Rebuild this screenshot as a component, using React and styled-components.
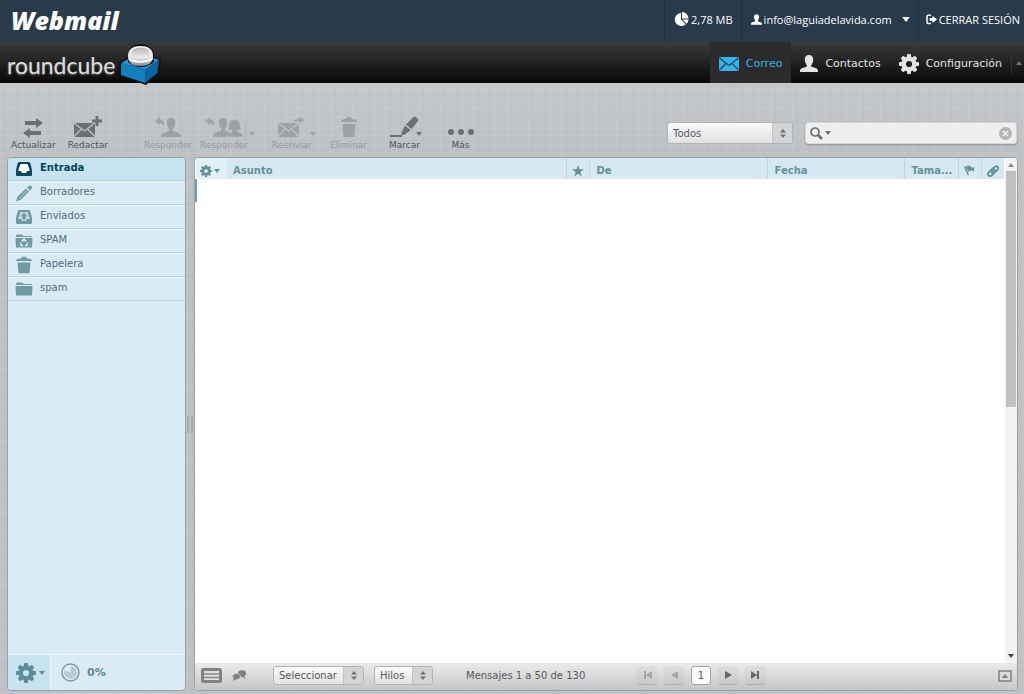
import React, { useState } from "react";
import styled, { createGlobalStyle, css } from "styled-components";

const GlobalStyle = createGlobalStyle`
  * {
    box-sizing: border-box;
  }
  body {
    margin: 0;
    font-family: "DejaVu Sans", sans-serif;
    font-size: 10px;
    color: #565b5e;
  }
  button, select, input {
    font: inherit;
    color: inherit;
    margin: 0;
  }
  button {
    border: 0;
    padding: 0;
    background: none;
    cursor: pointer;
  }
  a {
    color: inherit;
    text-decoration: none;
  }
  svg {
    display: block;
    flex: none;
  }
`;

/*-------------- Page --------------------*/
const Page = styled.div`
  display: flex;
  flex-direction: column;
  min-height: 100vh;
  background:
    repeating-linear-gradient(90deg, rgba(255, 255, 255, 0.06) 0 1px, transparent 1px 5px, rgba(70, 80, 90, 0.03) 5px 6px, transparent 6px 11px),
    repeating-linear-gradient(0deg, rgba(255, 255, 255, 0.06) 0 1px, transparent 1px 4px, rgba(70, 80, 90, 0.03) 4px 5px, transparent 5px 9px),
    linear-gradient(#c5c8ca 83px, #bfc2c5 150px, #bfc2c5);
`;

/*-------------- Account bar --------------------*/
const AccountBar = styled.header`
  display: flex;
  justify-content: space-between;
  height: 42px;
  background: #293a4a;
  color: #fff;
  font-family: "Open Sans", sans-serif;
  font-size: 11px;
`;

const Brand = styled.a`
  padding-left: 11px;
  font: italic 800 25px/40px "Open Sans", sans-serif;
`;

const AccountMenu = styled.div`
  display: flex;
`;

const accountItem = css`
  display: flex;
  align-items: center;
  gap: 2px;
  height: 42px;
  padding: 0 8px 4px 9px;
  border-left: 1px solid #22303e;
  white-space: nowrap;
`;

const AccountInfo = styled.div`
  ${accountItem}
`;

const AccountButton = styled.button`
  ${accountItem}
  svg:last-child {
    margin-left: 8px;
  }
`;

const LogoutLink = styled.a`
  ${accountItem}
  padding: 0 4px 4px 7px;
`;

/*-------------- Task bar --------------------*/
const TaskBar = styled.nav`
  display: flex;
  justify-content: space-between;
  height: 41px;
  background: linear-gradient(#3b3b3b, #080808);
  color: #e4e4e4;
`;

const Logo = styled.a`
  display: flex;
  gap: 3px;
  height: 44px;
  padding-left: 7px;
  font: 400 23px/46px Lato, sans-serif;
  color: #dcdcdc;
  text-shadow: 0 1px 2px #777;
`;

const Tasks = styled.div`
  display: flex;
`;

const TaskLink = styled.a`
  display: flex;
  align-items: center;
  gap: 7px;
  padding: 2px 9px 0;
  font-size: 11px;
  color: ${(p) => (p.$active ? "#35b3ee" : "#e4e4e4")};
  background: ${(p) => (p.$active ? "#2b2b2b" : "none")};
`;

const TaskToggle = styled.button`
  width: 13px;
  margin: 8px 0;
  padding-left: 4px;
  border-left: 1px solid #333;
`;

/*-------------- Toolbar --------------------*/
const Toolbar = styled.div`
  display: flex;
  align-items: flex-start;
  justify-content: space-between;
  height: 74px;
  padding: 33px 7px 0 11px;
`;

const Tools = styled.div`
  display: flex;
  gap: 8px;
`;

const ToolGroup = styled.div`
  position: relative;
  margin-left: ${(p) => p.$before || 0}px;
  opacity: ${(p) => (p.$disabled ? 0.4 : 1)};
`;

const ToolButton = styled.button`
  display: flex;
  flex-direction: column;
  align-items: center;
  min-width: 38px;
  font-size: 9px;
  line-height: 14px;
  color: #505457;
  svg {
    color: #6b7073;
  }
`;

const arrowOffsets = { split: -9, plain: -7, tight: -1 };

const ToolArrow = styled.button`
  position: absolute;
  top: 6px;
  right: ${(p) => arrowOffsets[p.$kind]}px;
  width: 12px;
  height: 18px;
  padding: 5px 0 0 3px;
  border-left: ${(p) => (p.$kind === "split" ? "1px solid #999" : "0")};
  color: #6b7073;
`;

const Filters = styled.div`
  display: flex;
  gap: 12px;
  padding-top: 6px;
`;

const SearchBox = styled.label`
  display: flex;
  align-items: center;
  gap: 2px;
  width: 212px;
  height: 22px;
  padding: 0 4px;
  border: 1px solid #d4d6d7;
  border-radius: 3px;
  background: #efefef;
  box-shadow: 0 1px 2px #8c8f92;
`;

const SearchInput = styled.input`
  flex: 1;
  min-width: 0;
  border: 0;
  outline: 0;
  background: none;
`;

/*-------------- Drop-downs --------------------*/
const SelectFrame = styled.div`
  position: relative;
  width: ${(p) => p.$width}px;
  height: ${(p) => (p.$tall ? 22 : 19)}px;
  border: 1px solid #b1b3b4;
  border-radius: 3px;
  overflow: hidden;
  background: linear-gradient(#fafafa, #e2e2e2);
`;

const Select = styled.select`
  display: block;
  width: 100%;
  height: 100%;
  padding: 0 22px 0 5px;
  border: 0;
  outline: 0;
  appearance: none;
  background: none;
`;

const SelectKnob = styled.span`
  position: absolute;
  top: 0;
  right: 0;
  bottom: 0;
  display: grid;
  place-items: center;
  width: 20px;
  border-left: 1px solid #c4c4c4;
  background: #d2d3d4;
  pointer-events: none;
`;

/*-------------- Main screen --------------------*/
const Main = styled.main`
  display: flex;
  flex: 1;
  padding: 0 6px 3px 7px;
`;

const Sidebar = styled.aside`
  display: flex;
  flex-direction: column;
  width: 179px;
  border: 1px solid #9aa1a5;
  border-radius: 4px;
  overflow: hidden;
  background: #d9ecf4;
`;

const Folders = styled.ul`
  flex: 1;
  margin: -1px 0 0;
  padding: 0;
  list-style: none;
`;

const FolderLink = styled.a`
  display: flex;
  align-items: center;
  gap: 7px;
  height: 24px;
  padding: 0 7px;
  border-top: 1px solid #eaf5fa;
  border-bottom: 1px solid #bbd3da;
  line-height: 20px;
  color: ${(p) => (p.$active ? "#004458" : "#4f6d78")};
  font-weight: ${(p) => (p.$active ? 700 : 400)};
  background: ${(p) => (p.$active ? "#c7e3ef" : "none")};
  svg {
    color: ${(p) => (p.$active ? "#064a60" : "#6f9ba5")};
  }
  span {
    padding-bottom: 3px;
  }
`;

const SidebarFooter = styled.div`
  display: flex;
  height: 36px;
  border-top: 1px solid #f1f9fc;
  color: #64868f;
`;

const FolderOptions = styled.button`
  display: flex;
  align-items: center;
  gap: 3px;
  width: 43px;
  padding-left: 8px;
  border-right: 1px solid #eef7fb;
  background: #c7e3ef;
  color: #5e8c99;
`;

const Quota = styled.div`
  display: flex;
  align-items: center;
  gap: 7px;
  padding-left: 10px;
  font-size: 11px;
  font-weight: 700;
`;

const Splitter = styled.div`
  display: grid;
  place-items: center;
  width: 8px;
  &::after {
    content: "";
    width: 2px;
    height: 17px;
    border: solid #a3a8ad;
    border-width: 0 2px;
  }
`;

const Messages = styled.section`
  display: flex;
  flex: 1;
  flex-direction: column;
  min-width: 0;
  border: 1px solid #9aa1a5;
  border-radius: 4px;
  overflow: hidden;
  background: #fff;
`;

const MessageScroller = styled.div`
  display: flex;
  flex: 1;
`;

const MessageArea = styled.div`
  flex: 1;
  min-width: 0;
`;

const MessageTable = styled.table`
  width: 100%;
  table-layout: fixed;
  border-collapse: collapse;
  th {
    height: 21px;
    padding: 4px 0 0 7px;
    border-left: 1px solid #bdd6df;
    background: #d6e9f3;
    color: #649199;
    font-weight: 700;
    line-height: 17px;
    text-align: left;
    overflow: hidden;
    white-space: nowrap;
  }
  th:first-child {
    padding-left: 4px;
    border-left: 0;
    background: #e1f0f6;
  }
  th:nth-child(2) {
    border-left: 0;
  }
  th:has(> svg) {
    padding-left: 5px;
  }
  td {
    height: 22px;
    padding: 0;
    border-top: 2px solid #fff;
  }
  td:first-child {
    border-left: 2px solid #69a3b5;
  }
`;

const Col = styled.col`
  width: ${(p) => (p.$width ? `${p.$width}px` : "auto")};
`;

const ColumnButton = styled.button`
  display: flex;
  align-items: center;
  gap: 2px;
  height: 17px;
`;

const Scrollbar = styled.div`
  display: flex;
  flex-direction: column;
  justify-content: space-between;
  align-items: center;
  width: 13px;
  padding: 5px 1px;
  background: #f2f2f2;
  border-left: 1px solid #fff;
`;

const ScrollThumb = styled.div`
  width: 100%;
  height: 236px;
  margin: 4px 0 auto;
  background: #c1c1c1;
`;

const ListFooter = styled.footer`
  display: flex;
  align-items: center;
  height: 27px;
  padding: 0 5px 2px 6px;
  background: linear-gradient(#ebebeb, #c6c6c6);
  white-space: nowrap;
`;

const ViewModes = styled.div`
  display: flex;
  align-items: center;
  gap: 10px;
  width: 72px;
`;

const FooterSelects = styled.div`
  display: flex;
  gap: 10px;
`;

const CountText = styled.span`
  width: 204px;
  padding-left: 33px;
`;

const Pager = styled.div`
  display: flex;
  gap: 7px;
  margin-right: auto;
`;

const PageButton = styled.button`
  display: grid;
  place-items: center;
  width: 20px;
  height: 18px;
  border-radius: 3px;
  background: linear-gradient(#dedede, #c9c9c9);
  box-shadow: 0 1px 1px #aaa;
  color: ${(p) => (p.disabled ? "#a5a5a5" : "#666")};
`;

const PageInput = styled.input`
  width: 20px;
  height: 19px;
  padding: 0;
  border: 1px solid #a4a4a4;
  border-radius: 3px;
  background: #fafafa;
  text-align: center;
`;

/*-------------- Icons --------------------*/
const Triangle = ({ up, size = 6, color = "currentColor" }) => (
  <svg width={size} height={size / 2 + 1} viewBox="0 0 6 4" fill={color}>
    <path d={up ? "M0 4 3 0 6 4Z" : "M0 0H6L3 4Z"} />
  </svg>
);

const UpDown = () => (
  <svg width="6" height="9" viewBox="0 0 6 9" fill="#707273">
    <path d="M0 3.5 3 0 6 3.5ZM0 5.5H6L3 9Z" />
  </svg>
);

const teeth = [0, 45, 90, 135, 180, 225, 270, 315];

const Gear = ({ size }) => (
  <svg width={size} height={size} viewBox="0 0 20 20" fill="currentColor">
    {teeth.map((angle) => (
      <path key={angle} d="M7.500 4 8.300 0H11.700L12.500 4Z" transform={`rotate(${angle} 10 10)`} />
    ))}
    <circle cx="10" cy="10" r="5.2" fill="none" stroke="currentColor" strokeWidth="4.2" />
  </svg>
);

const Person = ({ width, height }) => (
  <svg width={width} height={height} viewBox="0 0 18 17" fill="currentColor">
    <path d="M9 0C12 0 13.400 2 13.200 5 13 7.500 12 9 11.300 10V11.500C13 12.700 18 12.500 18 16V17H0V16C0 12.500 5 12.700 6.700 11.500V10C6 9 5 7.500 4.800 5 4.600 2 6 0 9 0Z" />
  </svg>
);

const Pie = () => (
  <svg width="15" height="15" viewBox="0 0 15 15" fill="#fff">
    <path d="M7 1A6.500 6.500 0 1 0 11.700 12.300L7 7.600Z" />
    <path d="M8 0A7 7 0 0 1 14.600 6.600H8ZM8.400 7.600H14.600A6.500 6.500 0 0 1 12.600 11.700Z" />
  </svg>
);

const Logout = () => (
  <svg width="11" height="11" viewBox="0 0 11 11">
    <path d="M5 1.200H2.300Q1 1.200 1 2.500V8.200Q1 9.600 2.300 9.600H5" fill="none" stroke="#fff" strokeWidth="1.500" />
    <path d="M3.500 4H6.500V1.800L11 5.400 6.500 9V6.800H3.500Z" fill="#fff" />
  </svg>
);

const MailTask = () => (
  <svg width="20" height="14" viewBox="0 0 20 14">
    <path d="M0 0H20V14H0Z" fill="#35b3ee" />
    <path d="M0 .5 10 8.500 20 .5M0 13.500 7 6.500M20 13.500 13 6.500" fill="none" stroke="#24536c" strokeWidth="1.400" />
  </svg>
);

const Cube = () => (
  <svg width="44" height="44" viewBox="0 0 44 44">
    <defs>
      <linearGradient id="ball" x1="0" y1="0" x2="0" y2="1">
        <stop offset="0" stopColor="#f4f4f4" />
        <stop offset=".6" stopColor="#e4e4e4" />
        <stop offset="1" stopColor="#8a8a8a" />
      </linearGradient>
      <linearGradient id="hollow" x1="0" y1="0" x2="0" y2="1">
        <stop offset="0" stopColor="#b5b5b5" />
        <stop offset="1" stopColor="#f0f0f0" />
      </linearGradient>
    </defs>
    <path d="M1 20 10 15C9 6 15 2 22.500 2 31 2 37 8 36 15L43 17 41 32 28 43 2 34Z" fill="#0d1115" />
    <path d="M3 21 12 16H35L41 18 27 28Z" fill="#2a8fca" />
    <path d="M3 21 27 28V41L3 33Z" fill="#1280bf" />
    <path d="M27 28 41 18 39.500 31 27 41Z" fill="#0a659f" />
    <path d="M10 17Q22 29 36 17V20Q23 30 10 20Z" fill="#0d1115" />
    <path d="M10 14C10 7 15 4 22.500 4S35 7 35 14C35 21 30 24 22.500 24S10 21 10 14Z" fill="url(#ball)" />
    <ellipse cx="22.500" cy="11" rx="9" ry="5.500" fill="url(#hollow)" />
    <path d="M11 17Q22 23 34 17" fill="none" stroke="#fff" strokeWidth="1.500" />
  </svg>
);

const Refresh = () => (
  <svg width="20" height="22" viewBox="0 0 20 22" fill="currentColor">
    <path d="M2 5H13V2L20 7 13 12V9H2ZM18 19H7V22L0 17 7 12V15H18Z" />
  </svg>
);

const Envelope = ({ forward }) => (
  <svg width="28" height="22" viewBox="0 0 28 22">
    <path d="M0 7H21V21H0Z" fill="currentColor" />
    <path d="M0 7 10.500 15 21 7M0 20.500 7.500 13M21 20.500 13.500 13" fill="none" stroke="#c0c3c5" strokeWidth="1.200" />
    {forward ? (
      <path d="M14 6Q16 2.500 21 2.500V0L27 4 21 8V5.500Q17 5.500 14 6Z" fill="currentColor" stroke="#c0c3c5" strokeWidth=".7" />
    ) : (
      <path d="M21.500 0H24.500V3.500H28V6.500H24.500V10H21.500V6.500H18V3.500H21.500Z" fill="currentColor" />
    )}
  </svg>
);

const headPath = "M10 0C13 0 14.500 2 14 5 13.800 8 13 9.500 12 10.500V13C15 14.500 20 14 20 19H0C0 14 5 14.500 8 13V10.500C7 9.500 6.200 8 6 5 5.500 2 7 0 10 0Z";

const Reply = ({ all }) => (
  <svg width={all ? 38 : 26} height="22" viewBox={all ? "0 0 38 22" : "0 0 26 22"} fill="currentColor">
    <path d="M0 5 5 1V3.500Q10 3.500 9 11 8 7 5 7V9Z" />
    <path d={headPath} transform={all ? "translate(8 2)" : "translate(6 2)"} />
    {all && (
      <path d="M29.500 4C24 3 24 7 23 14H27V16C25 17 23 17 21 21H38C38 16 35 17 32 15V14H36C35 8 35 3 29.500 4Z" stroke="#c0c3c5" strokeWidth=".6" />
    )}
  </svg>
);

const Trash = ({ height = 22 }) => (
  <svg width="18" height={height} viewBox="0 0 18 22" preserveAspectRatio="none" fill="currentColor">
    <path d="M1 6Q1 3 6 3L7 1H11L12 3Q17 3 17 6ZM2.500 8H15.500L14.500 21H3.500Z" />
  </svg>
);

const Marker = () => (
  <svg width="30" height="22" viewBox="0 0 30 22" fill="currentColor">
    <path d="M0 19H12V21H0ZM11.500 17 15 9.500 20.500 14 14 19H11.500ZM16 8.500 23.500 1Q24.500 0 25.500 1L28 3Q29 4 28 5L21.500 13Z" />
  </svg>
);

const Dots = () => (
  <svg width="26" height="22" viewBox="0 0 26 22" fill="currentColor">
    <circle cx="3" cy="16" r="3" />
    <circle cx="13" cy="16" r="3" />
    <circle cx="23" cy="16" r="3" />
  </svg>
);

const SearchIcon = () => (
  <svg width="13" height="13" viewBox="0 0 13 13" fill="none" stroke="#6b6d6e">
    <circle cx="5" cy="5" r="4" strokeWidth="1.700" />
    <path d="M8 8 12 12" strokeWidth="2.500" />
  </svg>
);

const ClearIcon = () => (
  <svg width="13" height="13" viewBox="0 0 13 13">
    <circle cx="6.500" cy="6.500" r="6.500" fill="#b4b6b7" />
    <path d="M4 4 9 9M9 4 4 9" stroke="#f2f2f2" strokeWidth="1.500" />
  </svg>
);

const Tray = ({ sent }) => (
  <svg width="18" height="16" viewBox="0 0 18 16" fill="currentColor">
    <path d="M4 1H14Q15 1 15.500 3L17 9V14Q17 15 16 15H2Q1 15 1 14V9L2.500 3Q3 1 4 1Z" />
    <path d="M5.500 3H12.500L14.500 8.500V10H12L11 12H7L6 10H3.500V8.500Z" fill={sent ? "#c3dde5" : "#fff"} />
    {sent && <path d="M9 3.500 12.500 7.500H10.500V10.500H7.500V7.500H5.500Z" />}
  </svg>
);

const Pencil = () => (
  <svg width="18" height="17" viewBox="0 0 18 17" fill="currentColor">
    <path d="M1 16.500 2.500 11.500 11 3.500 14 6.500 6 14.500ZM12 2.500 14 1Q15.500 0 16.500 1T16.800 3.500L15 5.500Z" />
    <path d="M4 13.500 12 5.500" stroke="#d9ecf4" strokeWidth=".6" />
  </svg>
);

const Folder = ({ junk }) => (
  <svg width="18" height="16" viewBox="0 0 18 16">
    <path d="M1 4V2.500L2 1.500H7L8.500 3H16Q17 3 17 4Z" fill="currentColor" />
    <path d="M.5 5H17.500L17 14.500H1Z" fill="currentColor" />
    {junk && <path d="M7 8.500 9 6 11 8.500M12.500 9.500 12 12.500H10M8 12.500H6L5.500 9.500" fill="none" stroke="#d9ecf4" strokeWidth="1.500" />}
  </svg>
);

const QuotaPie = () => (
  <svg width="19" height="19" viewBox="0 0 19 19">
    <circle cx="9.500" cy="9.500" r="8.500" fill="#e1eff4" stroke="#7c999f" strokeWidth="1.500" />
    <path d="M9.500 9.500V3A6.500 6.500 0 1 1 3.500 7Z" fill="#b8cdd3" />
  </svg>
);

const Star = () => (
  <svg width="12" height="12" viewBox="0 0 12 12" fill="currentColor">
    <path d="M6 0 7.500 4.300H12L8.400 7 9.800 11.500 6 8.800 2.200 11.500 3.600 7 0 4.300H4.500Z" />
  </svg>
);

const Flag = () => (
  <svg width="11" height="11" viewBox="0 0 11 11" fill="currentColor">
    <path d="M0 2 1.500 1 5 10H3.500ZM2 1.200Q5 -.5 6.500 1.500T10.500 2L9.500 7Q8 4.500 6.500 5.500L4.500 7Z" />
  </svg>
);

const Clip = () => (
  <svg width="12" height="12" viewBox="0 0 13 13" fill="none" stroke="currentColor" strokeWidth="2">
    <path d="M3.500 7 8 2.500Q10 .5 11.500 2T11 5.500L5.500 11Q3.500 13 1.800 11.200T2.300 7.500L7 3M4.500 9 9 4.500" />
  </svg>
);

const ListIcon = () => (
  <svg width="21" height="17" viewBox="0 0 21 17">
    <rect x="1.500" y="2.500" width="18" height="12" rx="1" fill="#e0e0e0" stroke="#808182" strokeWidth="3" />
    <path d="M3 7H18M3 10.500H18" stroke="#858687" strokeWidth="1.300" />
  </svg>
);

const Threads = () => (
  <svg width="15" height="11" viewBox="0 0 15 11" fill="#808080">
    <ellipse cx="10" cy="3.500" rx="4" ry="3.300" />
    <path d="M11 5 14 9 8 6Z" />
    <ellipse cx="4.500" cy="6.500" rx="4" ry="3" stroke="#ddd" strokeWidth=".7" />
    <path d="M2 7 1 11 5 9Z" />
  </svg>
);

const PageArrow = ({ back, end }) => (
  <svg width="9" height="8" viewBox="0 0 9 8" fill="currentColor">
    <g transform={back ? "translate(9 0) scale(-1 1)" : undefined}>
      <path d={end ? "M0 0 6 4 0 8ZM6 0H8V8H6Z" : "M1 0 8 4 1 8Z"} />
    </g>
  </svg>
);

const PanelToggle = () => (
  <svg width="14" height="12" viewBox="0 0 14 12">
    <rect x="1" y="1" width="12" height="10" fill="#ddd" stroke="#808080" strokeWidth="1.500" />
    <path d="M3.500 8 7 4 10.500 8Z" fill="#808080" />
  </svg>
);

/*-------------- Data --------------------*/
const tools = [
  { id: "refresh", label: "Actualizar", icon: <Refresh /> },
  { id: "compose", label: "Redactar", icon: <Envelope />, before: 4 },
  { id: "reply", label: "Responder", icon: <Reply />, disabled: true, before: 28 },
  { id: "replyall", label: "Responder", icon: <Reply all />, disabled: true, arrow: "split" },
  { id: "forward", label: "Reenviar", icon: <Envelope forward />, disabled: true, arrow: "plain", before: 16 },
  { id: "delete", label: "Eliminar", icon: <Trash />, disabled: true, before: 10 },
  { id: "mark", label: "Marcar", icon: <Marker />, arrow: "tight", before: 10 },
  { id: "more", label: "Más", icon: <Dots />, before: 10 },
];

const folders = [
  { id: "inbox", name: "Entrada", icon: <Tray /> },
  { id: "drafts", name: "Borradores", icon: <Pencil /> },
  { id: "sent", name: "Enviados", icon: <Tray sent /> },
  { id: "junk", name: "SPAM", icon: <Folder junk /> },
  { id: "trash", name: "Papelera", icon: <Trash height={18} /> },
  { id: "spam", name: "spam", icon: <Folder /> },
];

const columnWidths = [30, 0, 23, 178, 137, 54, 23, 23];

/*-------------- Components --------------------*/
const Dropdown = ({ label, options, width, tall }) => (
  <SelectFrame $width={width} $tall={tall}>
    <Select aria-label={label}>
      {options.map((option) => (
        <option key={option}>{option}</option>
      ))}
    </Select>
    <SelectKnob>
      <UpDown />
    </SelectKnob>
  </SelectFrame>
);

const App = () => {
  const [folder, setFolder] = useState("inbox");
  const [search, setSearch] = useState("");
  const [page, setPage] = useState("1");

  return (
    <>
      <GlobalStyle />
      <Page>
        <AccountBar>
          <Brand href="#">Webmail</Brand>
          <AccountMenu>
            <AccountInfo>
              <Pie />
              2,78 MB
            </AccountInfo>
            <AccountButton>
              <Person width={11} height={11} />
              info@laguiadelavida.com
              <Triangle size={8} />
            </AccountButton>
            <LogoutLink href="#">
              <Logout />
              CERRAR SESIÓN
            </LogoutLink>
          </AccountMenu>
        </AccountBar>

        <TaskBar>
          <Logo href="#">
            roundcube
            <Cube />
          </Logo>
          <Tasks>
            <TaskLink href="#" $active>
              <MailTask />
              Correo
            </TaskLink>
            <TaskLink href="#">
              <Person width={18} height={17} />
              Contactos
            </TaskLink>
            <TaskLink href="#">
              <Gear size={20} />
              Configuración
            </TaskLink>
            <TaskToggle aria-label="Ocultar">
              <Triangle up color="#777" />
            </TaskToggle>
          </Tasks>
        </TaskBar>

        {/*-------------- Toolbar --------------------*/}
        <Toolbar>
          <Tools>
            {tools.map((tool) => (
              <ToolGroup key={tool.id} $before={tool.before} $disabled={tool.disabled}>
                <ToolButton disabled={tool.disabled}>
                  {tool.icon}
                  {tool.label}
                </ToolButton>
                {tool.arrow && (
                  <ToolArrow $kind={tool.arrow} disabled={tool.disabled} aria-label={`${tool.label}: opciones`}>
                    <Triangle />
                  </ToolArrow>
                )}
              </ToolGroup>
            ))}
          </Tools>
          <Filters>
            <Dropdown label="Filtro" options={["Todos", "No leídos"]} width={126} tall />
            <SearchBox>
              <SearchIcon />
              <Triangle color="#6b6d6e" />
              <SearchInput aria-label="Buscar" value={search} onChange={(e) => setSearch(e.target.value)} />
              <button aria-label="Limpiar" onClick={() => setSearch("")}>
                <ClearIcon />
              </button>
            </SearchBox>
          </Filters>
        </Toolbar>

        <Main>
          {/*-------------- Folders --------------------*/}
          <Sidebar>
            <Folders>
              {folders.map((item) => (
                <li key={item.id}>
                  <FolderLink href="#" $active={item.id === folder} onClick={() => setFolder(item.id)}>
                    {item.icon}
                    <span>{item.name}</span>
                  </FolderLink>
                </li>
              ))}
            </Folders>
            <SidebarFooter>
              <FolderOptions aria-label="Opciones de carpeta">
                <Gear size={20} />
                <Triangle />
              </FolderOptions>
              <Quota>
                <QuotaPie />
                0%
              </Quota>
            </SidebarFooter>
          </Sidebar>

          <Splitter />

          {/*-------------- Message list --------------------*/}
          <Messages>
            <MessageScroller>
              <MessageArea>
                <MessageTable>
                  <colgroup>
                    {columnWidths.map((width, i) => (
                      <Col key={i} $width={width} />
                    ))}
                  </colgroup>
                  <thead>
                    <tr>
                      <th>
                        <ColumnButton aria-label="Opciones de lista">
                          <Gear size={12} />
                          <Triangle />
                        </ColumnButton>
                      </th>
                      <th>Asunto</th>
                      <th aria-label="Estado"><Star /></th>
                      <th>De</th>
                      <th>Fecha</th>
                      <th>Tama...</th>
                      <th aria-label="Marcado"><Flag /></th>
                      <th aria-label="Adjunto"><Clip /></th>
                    </tr>
                  </thead>
                  <tbody>
                    <tr>
                      <td />
                      <td colSpan={7} />
                    </tr>
                  </tbody>
                </MessageTable>
              </MessageArea>
              <Scrollbar>
                <Triangle up color="#888" />
                <ScrollThumb />
                <Triangle color="#444" />
              </Scrollbar>
            </MessageScroller>
            <ListFooter>
              <ViewModes>
                <button aria-label="Lista">
                  <ListIcon />
                </button>
                <button aria-label="Conversaciones">
                  <Threads />
                </button>
              </ViewModes>
              <FooterSelects>
                <Dropdown label="Seleccionar" options={["Seleccionar", "Todo"]} width={91} />
                <Dropdown label="Hilos" options={["Hilos", "Expandir"]} width={59} />
              </FooterSelects>
              <CountText>Mensajes 1 a 50 de 130</CountText>
              <Pager>
                <PageButton disabled aria-label="Primera página"><PageArrow back end /></PageButton>
                <PageButton disabled aria-label="Página anterior"><PageArrow back /></PageButton>
                <PageInput aria-label="Página" value={page} onChange={(e) => setPage(e.target.value)} />
                <PageButton aria-label="Página siguiente"><PageArrow /></PageButton>
                <PageButton aria-label="Última página"><PageArrow end /></PageButton>
              </Pager>
              <button aria-label="Vista previa">
                <PanelToggle />
              </button>
            </ListFooter>
          </Messages>
        </Main>
      </Page>
    </>
  );
};

export default App;
